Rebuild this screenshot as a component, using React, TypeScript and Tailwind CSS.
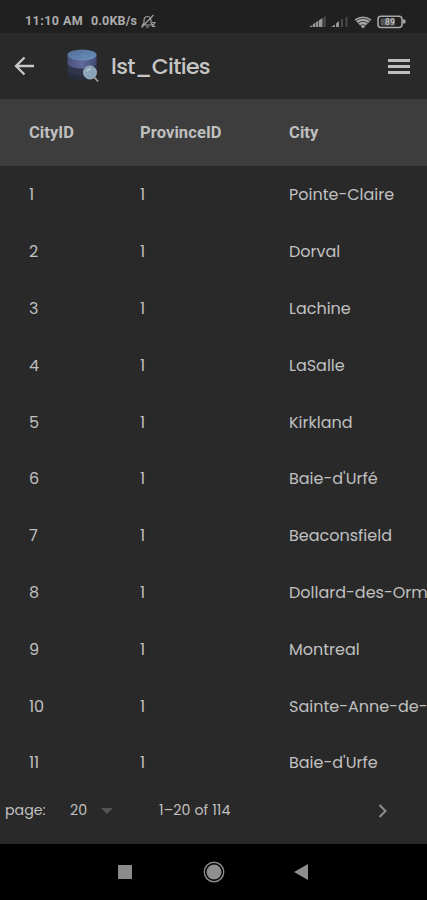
const cities = [
  { id: '1', name: 'Pointe-Claire' },
  { id: '2', name: 'Dorval' },
  { id: '3', name: 'Lachine' },
  { id: '4', name: 'LaSalle' },
  { id: '5', name: 'Kirkland' },
  { id: '6', name: "Baie-d'Urfé" },
  { id: '7', name: 'Beaconsfield' },
  { id: '8', name: 'Dollard-des-Orm' },
  { id: '9', name: 'Montreal' },
  { id: '10', name: 'Sainte-Anne-de-' },
  { id: '11', name: "Baie-d'Urfe" },
];

function StatusBar() {
  return (
    <div className="flex h-[33px] shrink-0 items-center bg-[#202020] pt-[10px] font-[Roboto,sans-serif] text-[12.5px] font-bold text-[#adadad]">
      <span className="ml-[25px] w-[66px] whitespace-nowrap tracking-[0.45px]">11:10 AM</span>
      <span className="w-[49px] whitespace-nowrap tracking-[0.15px]">0.0KB/s</span>
      <svg className="h-[15px] w-[16px]" viewBox="0 0 16 15" fill="none" stroke="#a0a0a0" strokeWidth="1.2">
        <path d="M2.500 11h10L11 8.800V6.500c0-2.200-1.200-3.800-3.500-4S4 4.300 4 6.500v2.300zM6 13h3M1.500 13.500 13.500 1M12 8.500h3l-2.500 4h3" />
      </svg>
      <svg className="ml-auto mr-[20px] h-[16px] w-[98px]" viewBox="0 0 98 16">
        <g fill="#969696">
          <path d="M0 13Q3 11.500 5 9.500L13.500 4v9z" />
          <path d="M14.500 13V3.500L16.500 2v11z" opacity=".4" />
          <path d="M22 13q2-1.500 4-2.500v2.500zM27 13v-3.500L30 7v6z" />
          <path d="M32 13V5.500l2-1V13zM36.500 13V3.500l2-1V13z" opacity=".35" />
        </g>
        <path d="M3.500 9v4M6.500 8v5M9.500 6v7" stroke="#202020" strokeWidth=".6" />
        <path d="M45.500 5.500Q54-.500 62.500 5.500L54 14.500Z" fill="#a8a8a8" />
        <path d="M46.500 7.200Q54 1.500 61.500 7.200M48.700 9.400Q54 5.500 59.300 9.400M51 11.600Q54 9.700 57 11.600" fill="none" stroke="#202020" strokeWidth=".8" />
        <rect x="69" y="2.200" width="24" height="11.300" rx="3" fill="none" stroke="#a8a8a8" strokeWidth="1.600" />
        <rect x="71.500" y="4.400" width="14.500" height="7" rx="1" fill="#555555" />
        <path d="M94 5.500h1.500q1 0 1 1v2q0 1-1 1H94z" fill="#a8a8a8" />
        <text x="76" y="11" fill="#b7b7b7" fontSize="8.500" fontWeight="700" fontFamily="Roboto, sans-serif">89</text>
      </svg>
    </div>
  );
}

function DatabaseIcon() {
  return (
    <svg className="ml-[31px] h-[36px] w-[34px]" viewBox="0 0 34 36">
      <defs>
        <linearGradient id="lid" x1="0" y1="0" x2="1" y2="1">
          <stop stopColor="#4f6c98" />
          <stop offset="1" stopColor="#6c93bb" />
        </linearGradient>
        <linearGradient id="side">
          <stop stopColor="#494f79" />
          <stop offset=".5" stopColor="#60699a" />
          <stop offset="1" stopColor="#424c75" />
        </linearGradient>
      </defs>
      <path d="M1.500 17v10c0 3.200 6 5.500 14.500 5.500S30.500 30 30.500 27V17z" fill="#272d3d" />
      <path d="M1.500 15v7c0 3 6 5.500 14.500 5.500S30.500 25 30.500 22v-7z" fill="#30374d" />
      <path d="M1.500 7v8c0 3 6 5.500 14.500 5.500S30.500 18 30.500 15V7z" fill="url(#side)" />
      <ellipse cx="16" cy="7" rx="14.500" ry="5.500" fill="url(#lid)" />
      <path d="m28 29 4 4.500" stroke="#a4a09c" strokeWidth="1.800" />
      <circle cx="24" cy="24.500" r="6.500" fill="#8ca4b9" stroke="#9eb2c2" strokeWidth="1" />
      <path d="M21 23.500q1-3 4-2.500" fill="none" stroke="#b4c7d2" strokeWidth="1.500" />
    </svg>
  );
}

function AppBar() {
  return (
    <header className="flex h-[66px] shrink-0 items-center bg-[#292929]">
      <svg className="ml-[14px] h-[22px] w-[21px]" viewBox="0 0 21 22" fill="none" stroke="#c8c8c8" strokeWidth="2.300">
        <path d="M20 11H2.500M10.500 2.500 2 11l8.500 8.500" />
      </svg>
      <DatabaseIcon />
      <h1 className="ml-[11px] pt-[2px] whitespace-nowrap text-[22px] leading-8 font-medium tracking-[-0.65px] text-[#c5c5c5]">lst_Cities</h1>
      <div className="ml-auto mr-[17px] flex w-[22px] flex-col gap-[3px]">
        <span className="h-[3px] bg-[#bebebe]" />
        <span className="h-[3px] bg-[#bebebe]" />
        <span className="h-[3px] bg-[#bebebe]" />
      </div>
    </header>
  );
}

function Footer() {
  return (
    <footer className="flex h-[66px] shrink-0 items-center bg-[#292929] text-[14.2px] whitespace-nowrap text-[#c0c0c0]">
      <span className="ml-[5px] w-[65px]">page:</span>
      <span className="w-[31px] tracking-[0.2px]">20</span>
      <svg className="h-[6px] w-[12px]" viewBox="0 0 12 6"><path d="M0 0h12L6 6z" fill="#535353" /></svg>
      <span className="ml-[46px] tracking-[0.08px]">1–20 of 114</span>
      <svg className="ml-auto mr-[39px] h-[14px] w-[10px]" viewBox="0 0 10 14" fill="none" stroke="#8e8e8e" strokeWidth="2">
        <path d="m1.500 1 6 6-6 6" />
      </svg>
    </footer>
  );
}

function NavBar() {
  return (
    <nav className="flex grow items-center bg-black">
      <span className="ml-[118px] size-[14px] bg-[#8b8b8b]" />
      <svg className="ml-[70.5px] size-[22px]" viewBox="0 0 22 22">
        <circle cx="11" cy="11" r="9.700" fill="none" stroke="#858585" strokeWidth="1.500" />
        <circle cx="11" cy="11" r="7.500" fill="#8f8f8f" />
      </svg>
      <svg className="ml-[69px] h-[16px] w-[14px]" viewBox="0 0 14 16"><path d="M14 0v16L0 8z" fill="#8d8d8d" /></svg>
    </nav>
  );
}

export default function App() {
  return (
    <div className="flex h-[900px] w-[427px] flex-col overflow-hidden bg-[#292929] font-[Poppins,Inter,sans-serif]">
      <StatusBar />
      <AppBar />
      <div className="flex h-[67px] shrink-0 items-center bg-[#3d3d3d] pl-[29px] pt-[2px] font-[Roboto,sans-serif] text-[16.5px] font-bold text-[#bfbfbf]">
        <span className="w-[111px] tracking-[0.05px]">CityID</span>
        <span className="w-[149px] tracking-[0.1px]">ProvinceID</span>
        <span className="tracking-[0.1px]">City</span>
      </div>
      <main className="h-[611.5px] shrink-0 overflow-hidden">
        {cities.map((city) => (
          <div key={city.id} className="flex h-[56.8px] items-center border-b border-[#272727] pt-[3px] pl-[29px] text-[16px] whitespace-nowrap text-[#c0c0c0]">
            <span className="w-[111px] shrink-0">{city.id}</span>
            <span className="w-[149px] shrink-0">1</span>
            <span>{city.name}</span>
          </div>
        ))}
      </main>
      <Footer />
      <NavBar />
    </div>
  );
}
